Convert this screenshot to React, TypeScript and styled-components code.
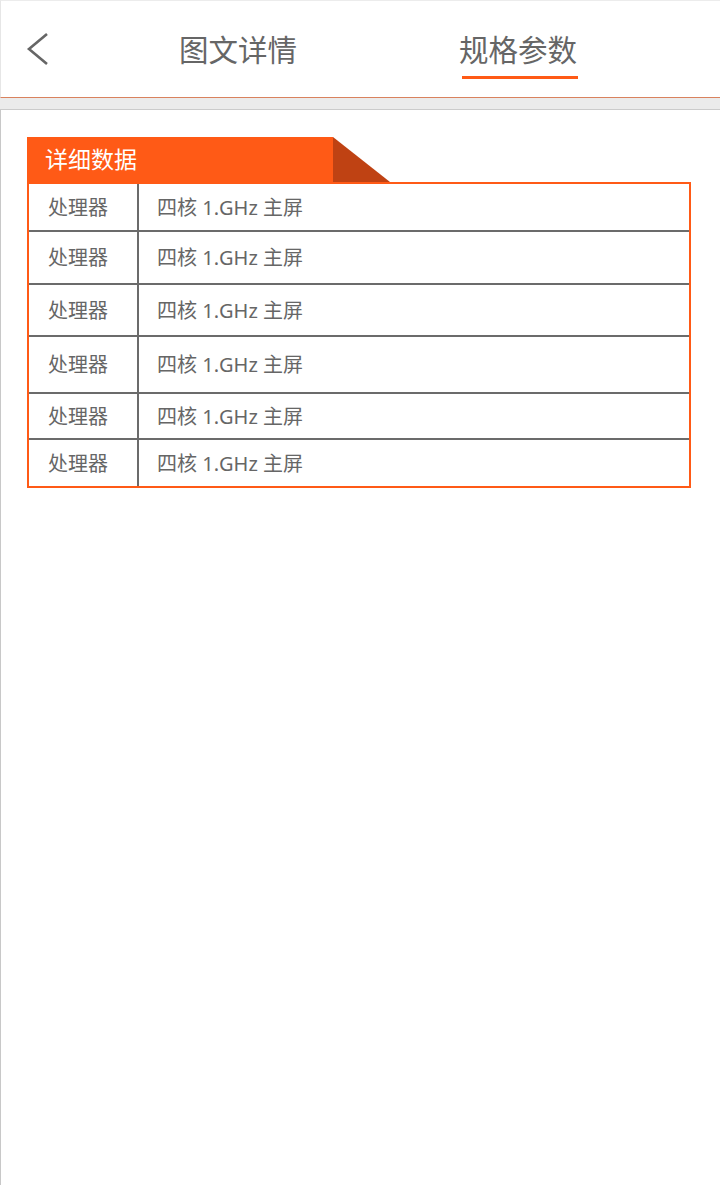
import * as React from 'react';
import styled, { createGlobalStyle } from 'styled-components';

const orange = '#ff5a16';
const textGray = '#666666';
const lineGray = '#6b6b6b';

const GlobalStyle = createGlobalStyle`
  html, body {
    margin: 0;
    padding: 0;
    background: #ffffff;
  }
  body {
    font-family: "Noto Sans", "Noto Sans CJK SC", sans-serif;
  }
`;

const Page = styled.div`
  display: flex;
  flex-direction: column;
  min-height: 100vh;
  width: 720px;
`;

const Header = styled.header`
  box-sizing: border-box;
  height: 98px;
  display: flex;
  align-items: flex-start;
  border-top: 1px solid #ececec;
  border-left: 1px solid #e6e6e6;
  border-bottom: 1px solid #d9825e;
`;

const BackButton = styled.button`
  width: 178px;
  height: 96px;
  padding: 0 0 0 25px;
  margin: 0;
  border: 0;
  background: none;
  display: flex;
  align-items: center;
  cursor: pointer;
`;

const Tabs = styled.nav`
  display: flex;
  gap: 160px;
  padding-top: 29px;
`;

const Tab = styled.div<{ active?: boolean }>`
  width: 120px;
  display: flex;
  flex-direction: column;
  color: ${textGray};
  font-size: 29.5px;
  line-height: 40px;
  white-space: nowrap;

  &::after {
    content: '';
    display: block;
    width: 116px;
    height: 3px;
    margin-top: 6px;
    margin-left: 3px;
    background: ${({ active }) => (active ? orange : 'transparent')};
  }
`;

const Band = styled.div`
  height: 11px;
  background: #ebebeb;
  border-bottom: 1px solid #cbcbcb;
`;

const Content = styled.main`
  flex: 1;
  border-left: 1px solid #c8c8c8;
  padding: 27px 29px 0 26px;
`;

const TitleBar = styled.div`
  display: flex;
  height: 45px;
`;

const TitleLabel = styled.div`
  box-sizing: border-box;
  width: 306px;
  height: 45px;
  padding-left: 18px;
  background: ${orange};
  color: #ffffff;
  font-size: 23px;
  line-height: 45px;
`;

const TitleFold = styled.div`
  width: 0;
  height: 0;
  border-bottom: 45px solid #bf4213;
  border-right: 57px solid transparent;
`;

const Table = styled.div`
  border: 2px solid ${orange};
`;

const Row = styled.div<{ h: number }>`
  display: flex;
  height: ${({ h }) => h}px;
  color: ${textGray};
  font-size: 20px;
  line-height: 24px;

  & + & {
    border-top: 2px solid ${lineGray};
  }
`;

const Label = styled.div`
  box-sizing: border-box;
  width: 110px;
  padding-left: 19px;
  padding-top: 1px;
  display: flex;
  align-items: center;
  border-right: 2px solid ${lineGray};
`;

const Value = styled.div`
  flex: 1;
  padding-left: 18px;
  padding-top: 1px;
  display: flex;
  align-items: center;
`;

const specs = [
  { label: '处理器', value: '四核 1.GHz 主屏', h: 46 },
  { label: '处理器', value: '四核 1.GHz 主屏', h: 51 },
  { label: '处理器', value: '四核 1.GHz 主屏', h: 50 },
  { label: '处理器', value: '四核 1.GHz 主屏', h: 55 },
  { label: '处理器', value: '四核 1.GHz 主屏', h: 44 },
  { label: '处理器', value: '四核 1.GHz 主屏', h: 46 },
];

export default function App() {
  return (
    <Page>
      <GlobalStyle />
      <Header>
        <BackButton aria-label="返回">
          <svg width="24" height="34" viewBox="0 0 24 34">
            <path d="M21 2 L3 17 L21 32" fill="none" stroke="#666" strokeWidth="2.6" />
          </svg>
        </BackButton>
        <Tabs>
          <Tab>图文详情</Tab>
          <Tab active>规格参数</Tab>
        </Tabs>
      </Header>
      <Band />
      <Content>
        <TitleBar>
          <TitleLabel>详细数据</TitleLabel>
          <TitleFold />
        </TitleBar>
        <Table>
          {specs.map((s, i) => (
            <Row key={i} h={s.h}>
              <Label>{s.label}</Label>
              <Value>{s.value}</Value>
            </Row>
          ))}
        </Table>
      </Content>
    </Page>
  );
}
